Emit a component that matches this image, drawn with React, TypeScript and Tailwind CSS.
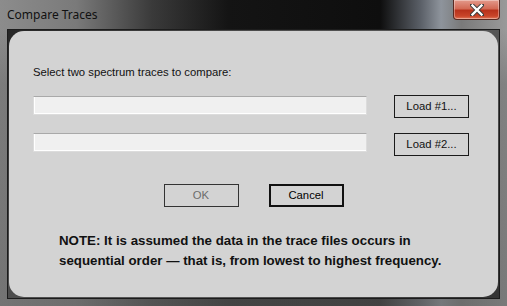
import React from 'react';

const ui = { fontFamily: '"Liberation Sans", Arial, sans-serif' };
const caption = { fontFamily: '"Noto Sans", "Open Sans", sans-serif' };

function CloseButton() {
  return (
    <div className="w-[47px] h-[20px] mr-[7px] rounded-b-[4px] border border-t-0 border-[#5a2a22] bg-[linear-gradient(to_bottom,#e39a8c_0%,#d36a55_45%,#b8321c_55%,#c9452a_85%,#e07a5c_100%)] flex items-center justify-center shadow-[inset_0_0_0_1px_rgba(255,255,255,0.35)]">
      <svg width="14" height="12" viewBox="0 0 14 12">
        <path d="M2 1 L12 11 M12 1 L2 11" stroke="#3a3a3a" strokeWidth="4.2" strokeLinecap="square" />
        <path d="M2.5 1.5 L11.5 10.5 M11.5 1.5 L2.5 10.5" stroke="#ffffff" strokeWidth="2.4" strokeLinecap="square" />
      </svg>
    </div>
  );
}

function TextBox() {
  return (
    <div className="w-[334px] h-[19px] bg-[#f0f0f0] border border-[#dcdcdc] border-t-[#a9a9a9] shadow-[inset_1px_-1px_0_#ffffff]" />
  );
}

function Button({ children, disabled, primary }: { children: React.ReactNode; disabled?: boolean; primary?: boolean }) {
  return (
    <div
      className={`w-[75px] h-[23px] flex items-center justify-center text-[11.3px] bg-[#d3d3d3] ${
        primary ? 'border-2 border-[#111]' : disabled ? 'border border-[#333] text-[#6d6d6d]' : 'border border-[#1a1a1a] text-[#111]'
      }`}
      style={ui}
    >
      {children}
    </div>
  );
}

export default function App() {
  return (
    <div className="w-[507px] h-[306px] flex flex-col overflow-hidden bg-[linear-gradient(to_right,#8c8c8c_0%,#7a7a7a_15%,#3a3a3a_30%,#141414_45%,#0e0e0e_75%,#5b6068_83%,#8e949c_87%,#7a7a7a_91%,#9a9a9a_100%)]">
      {/* title bar */}
      <div className="h-[29px] flex items-start shrink-0">
        <div className="pl-[7px] pt-[7px] text-[12px] text-[#111] leading-[16px]" style={caption}>
          Compare Traces
        </div>
        <div className="flex-1" />
        <CloseButton />
      </div>

      {/* client area */}
      <div className="flex-1 px-[7px] pb-[7px] bg-[linear-gradient(to_bottom,transparent_0%,rgba(110,110,110,0.55)_20%,rgba(100,100,100,0.6)_100%)]">
        <div className="h-full border border-[#1c1c1c] bg-[linear-gradient(135deg,#262626_0%,#4a4a4a_30%,#5a5a5a_60%,#333_100%)] p-[1px]">
          <div className="h-full rounded-[15px] bg-[#d3d3d3] flex flex-col pl-[24px]" style={ui}>
            <div className="mt-[35px] text-[11.3px] leading-[13px] text-[#111]">
              Select two spectrum traces to compare:
            </div>

            <div className="mt-[16px] flex items-start gap-[27px]">
              <div className="mt-[1px]">
                <TextBox />
              </div>
              <Button>Load #1...</Button>
            </div>

            <div className="mt-[15px] flex items-start gap-[27px]">
              <TextBox />
              <Button>Load #2...</Button>
            </div>

            <div className="mt-[28px] flex justify-center gap-[30px] pr-[24px]">
              <Button disabled>OK</Button>
              <Button primary>Cancel</Button>
            </div>

            <div className="mt-[24px] pl-[26px] text-[13.3px] font-bold leading-[20px] text-[#111]">
              <div>NOTE: It is assumed the data in the trace files occurs in</div>
              <div>sequential order — that is, from lowest to highest frequency.</div>
            </div>
          </div>
        </div>
      </div>
    </div>
  );
}
